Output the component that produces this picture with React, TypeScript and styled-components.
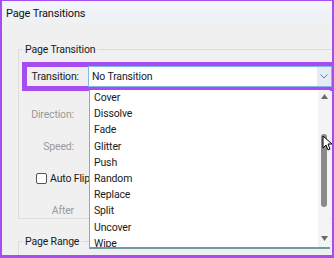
import React from "react";
import styled, { createGlobalStyle } from "styled-components";

const transitions = [
  "Cover",
  "Dissolve",
  "Fade",
  "Glitter",
  "Push",
  "Random",
  "Replace",
  "Split",
  "Uncover",
  "Wipe",
];

const GlobalStyle = createGlobalStyle`
  body {
    margin: 0;
    background: #ffffff;
    font-family: Roboto, "Noto Sans", sans-serif;
  }
`;

const App = () => {
  return (
    <>
      <GlobalStyle />
      <StyledFrame>
        <StyledTitleBar>Page Transitions</StyledTitleBar>
        <StyledBody>
          <StyledGroup>
            <StyledLegend>Page Transition</StyledLegend>
            <StyledHighlight>
              <StyledLabel>Transition:</StyledLabel>
              <StyledCombo>
                <span>No Transition</span>
                <StyledComboArrow>
                  <svg width="8" height="5" viewBox="0 0 8 5">
                    <path d="M0.5 0.5 L4 4 L7.5 0.5" fill="none" stroke="#6f7f92" strokeWidth="1" />
                  </svg>
                </StyledComboArrow>
              </StyledCombo>
            </StyledHighlight>
            <StyledFields>
              <StyledRow>
                <StyledLabel $muted>Direction:</StyledLabel>
              </StyledRow>
              <StyledRow>
                <StyledLabel $muted>Speed:</StyledLabel>
              </StyledRow>
              <StyledCheckRow>
                <StyledCheckbox />
                <span>Auto Flip</span>
              </StyledCheckRow>
              <StyledRow>
                <StyledLabel $muted>After</StyledLabel>
              </StyledRow>
            </StyledFields>
          </StyledGroup>
          <StyledGroupNext>
            <StyledLegend>Page Range</StyledLegend>
          </StyledGroupNext>
        </StyledBody>
        <StyledList>
          <StyledItems>
            {transitions.map((name) => (
              <StyledItem key={name}>{name}</StyledItem>
            ))}
          </StyledItems>
          <StyledScrollbar>
            <svg width="7" height="5" viewBox="0 0 7 5">
              <path d="M0 5 L3.5 0 L7 5 Z" fill="#6a6a6a" />
            </svg>
            <StyledTrack>
              <StyledThumb />
            </StyledTrack>
            <svg width="7" height="5" viewBox="0 0 7 5">
              <path d="M0 0 L3.5 5 L7 0 Z" fill="#6a6a6a" />
            </svg>
          </StyledScrollbar>
        </StyledList>
        <StyledCursor width="10" height="16" viewBox="0 0 10 16">
          <path
            d="M1 1 L1 13 L4 10 L6 15 L8 14 L6 9 L10 9 Z"
            fill="#ffffff"
            stroke="#000000"
            strokeWidth="1"
            strokeLinejoin="round"
          />
        </StyledCursor>
      </StyledFrame>
    </>
  );
};

const StyledFrame = styled.div`
  position: relative;
  width: 334px;
  height: 258px;
  box-sizing: border-box;
  border: 2px solid #a64cf0;
  border-top-width: 1px;
  border-bottom-width: 3px;
  background: #f0f0f0;
  overflow: hidden;
  font-size: 10.5px;
  letter-spacing: -0.15px;
  color: #1a1a1a;
`;

const StyledTitleBar = styled.div`
  height: 24px;
  display: flex;
  align-items: center;
  padding-left: 4px;
  font-size: 11px;
  color: #111111;
  background: linear-gradient(#f3f6fb, #eef2f8 60%, #f0f0f0);
`;

const StyledBody = styled.div`
  padding: 18px 0 0 16px;
  display: flex;
  flex-direction: column;
`;

const StyledGroup = styled.fieldset`
  margin: 0;
  padding: 6px 0 0 3px;
  height: 176px;
  box-sizing: border-box;
  border: 1px solid #dcdcdc;
  border-right: none;
  min-width: 0;
`;

const StyledGroupNext = styled(StyledGroup)`
  margin-top: 16px;
  height: 30px;
`;

const StyledLegend = styled.legend`
  padding: 0 2px;
  margin-left: 1px;
  color: #1a1a1a;
`;

const StyledHighlight = styled.div`
  display: flex;
  align-items: center;
  height: 29px;
  box-sizing: border-box;
  margin-right: -3px;
  border: 5px solid #a64cf0;
  border-right-width: 3px;
`;

const StyledLabel = styled.span<{ $muted?: boolean }>`
  width: 52px;
  text-align: right;
  flex-shrink: 0;
  color: ${(p) => (p.$muted ? "#9a9a9a" : "#1a1a1a")};
`;

const StyledCombo = styled.div`
  margin-left: 9px;
  flex: 1;
  height: 21px;
  box-sizing: border-box;
  display: flex;
  align-items: center;
  justify-content: space-between;
  padding-left: 3px;
  background: #ffffff;
  border: 1px solid #82b8e6;
`;

const StyledComboArrow = styled.div`
  width: 14px;
  height: 100%;
  display: flex;
  align-items: center;
  justify-content: center;
  background: #e4edf7;
`;

const StyledFields = styled.div`
  display: flex;
  flex-direction: column;
  padding-top: 7px;
`;

const StyledRow = styled.div`
  height: 32px;
  display: flex;
  align-items: center;
`;

const StyledCheckRow = styled(StyledRow)`
  gap: 3px;
  padding-left: 14px;
`;

const StyledCheckbox = styled.span`
  width: 11px;
  height: 11px;
  box-sizing: border-box;
  border: 1px solid #555555;
  border-radius: 2px;
  background: #ffffff;
`;

const StyledList = styled.div`
  position: absolute;
  left: 87px;
  top: 89px;
  width: 241px;
  height: 159px;
  box-sizing: border-box;
  display: flex;
  background: #ffffff;
  border-left: 1px solid #8fa6bd;
  border-bottom: 2px solid #6e9aa6;
  overflow: hidden;
`;

const StyledItems = styled.ul`
  flex: 1;
  margin: 0;
  padding: 0 0 0 4px;
  list-style: none;
`;

const StyledItem = styled.li`
  height: 16.2px;
  line-height: 16.2px;
  color: #1a1a1a;
`;

const StyledScrollbar = styled.div`
  width: 12px;
  display: flex;
  flex-direction: column;
  align-items: center;
  padding: 4px 0 6px;
  box-sizing: border-box;
  background: #f4f4f4;
`;

const StyledTrack = styled.div`
  flex: 1;
  padding-top: 35px;
`;

const StyledThumb = styled.div`
  width: 6px;
  height: 73px;
  border-radius: 3px;
  background: #8a8a8a;
`;

const StyledCursor = styled.svg`
  position: absolute;
  left: 320px;
  top: 134px;
`;

export default App;
